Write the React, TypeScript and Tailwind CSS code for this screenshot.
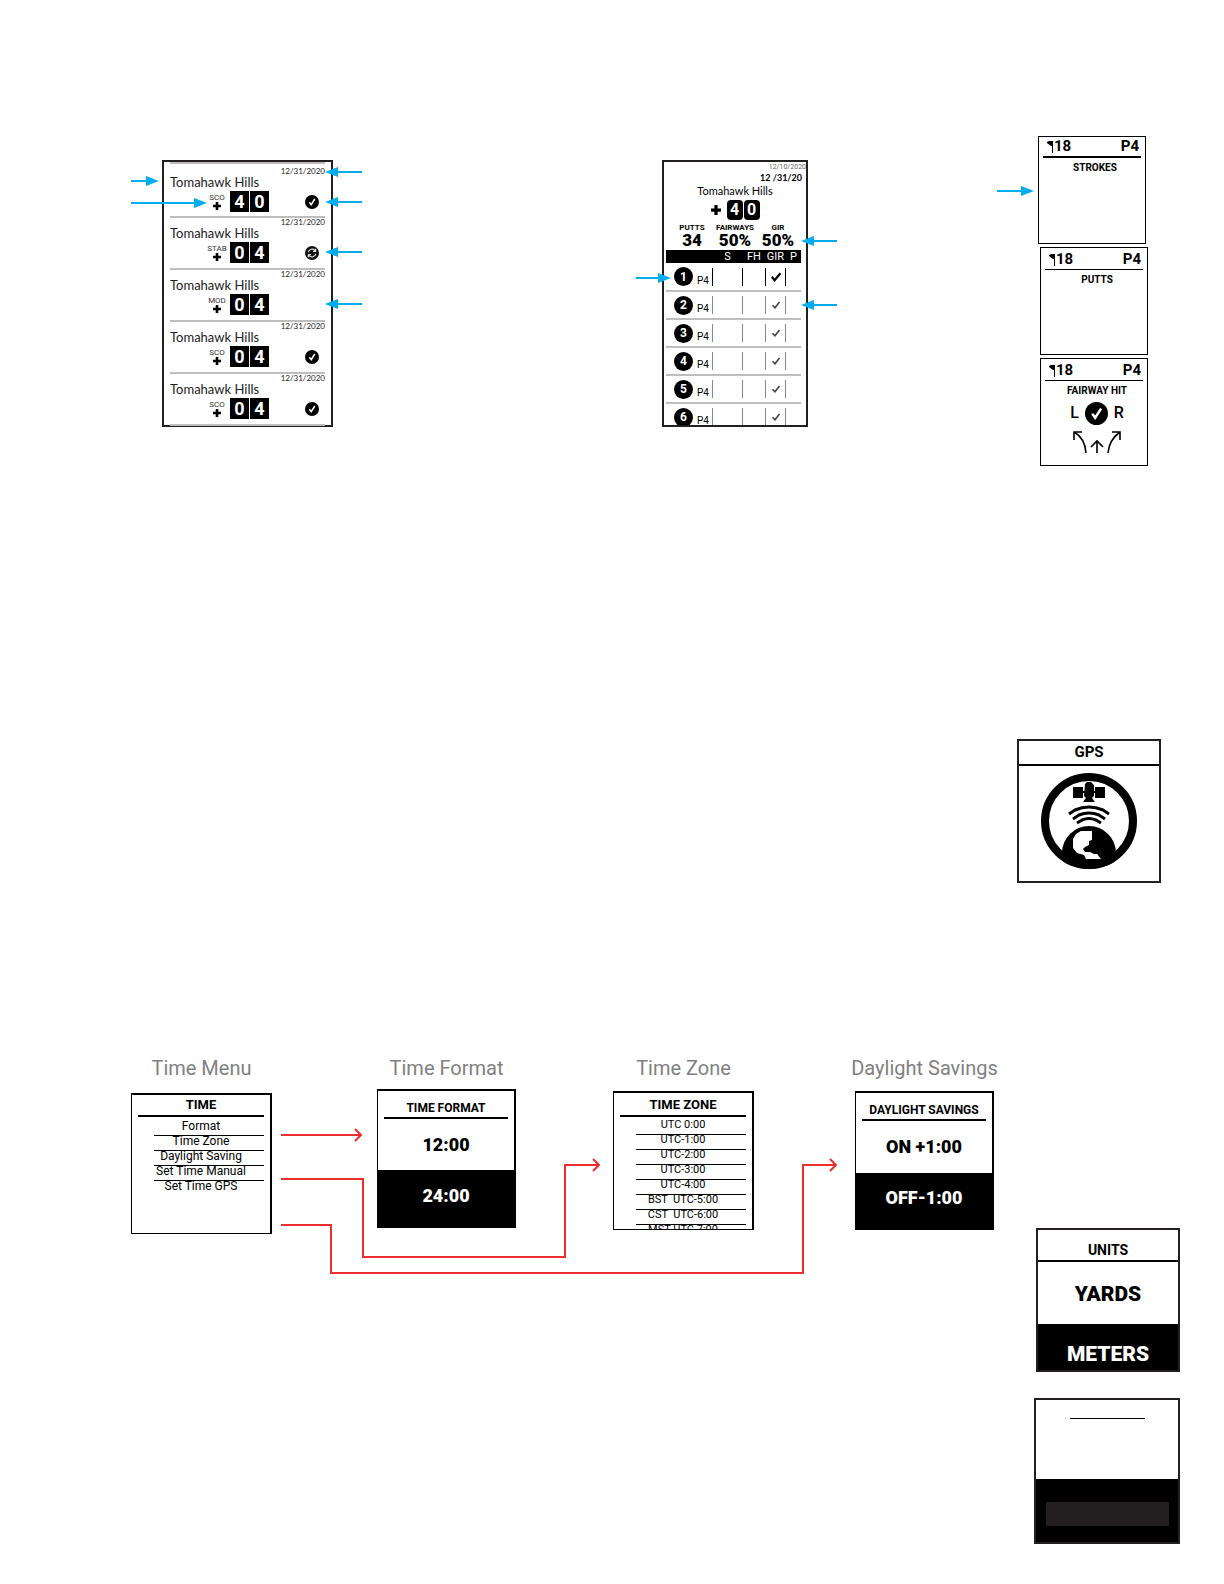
import type { ReactNode } from 'react';

type Mark = 'check' | 'sync' | 'none';

interface Round {
  mode: string;
  score: string;
  mark: Mark;
}

const rounds: Round[] = [
  { mode: 'SCO', score: '40', mark: 'check' },
  { mode: 'STAB', score: '04', mark: 'sync' },
  { mode: 'MOD', score: '04', mark: 'none' },
  { mode: 'SCO', score: '04', mark: 'check' },
  { mode: 'SCO', score: '04', mark: 'check' },
];

const totals = [
  { label: 'PUTTS', value: '34' },
  { label: 'FAIRWAYS', value: '50%' },
  { label: 'GIR', value: '50%' },
];

const holes = [1, 2, 3, 4, 5, 6];

const timeItems = ['Format', 'Time Zone', 'Daylight Saving', 'Set Time Manual', 'Set Time GPS'];

const zones = [
  'UTC 0:00',
  'UTC-1:00',
  'UTC-2:00',
  'UTC-3:00',
  'UTC-4:00',
  'BST  UTC-5:00',
  'CST  UTC-6:00',
  'MST UTC 7:00',
];

/* ---------- drawings ---------- */

function Arrow({ length, left, className }: { length: number; left?: boolean; className: string }) {
  return (
    <svg
      width={length}
      height={10}
      viewBox={`0 0 ${length} 10`}
      className={`absolute ${className} ${left ? 'rotate-180' : ''}`}
      aria-hidden="true"
    >
      <path d={`M0 5H${length - 12}`} stroke="#00aeef" strokeWidth={2} />
      <path d={`M${length - 13} 0L${length} 5L${length - 13} 10Z`} fill="#00aeef" />
    </svg>
  );
}

function Plus({ size }: { size: number }) {
  return (
    <svg width={size} height={size} viewBox="0 0 8 8" aria-hidden="true">
      <path d="M4 0V8M0 4H8" stroke="#000" strokeWidth={2.6} />
    </svg>
  );
}

function CheckBadge({ size }: { size: number }) {
  return (
    <svg width={size} height={size} viewBox="0 0 14 14" aria-hidden="true">
      <circle cx={7} cy={7} r={7} fill="#000" />
      <path d="M4.4 7.2L6.2 9.6L9.8 4" fill="none" stroke="#fff" strokeWidth={1.5} />
    </svg>
  );
}

function Check({ bold }: { bold?: boolean }) {
  return (
    <svg width={10} height={10} viewBox="0 0 10 10" aria-hidden="true">
      <path
        d={bold ? 'M0.8 4.8L3.6 8.2L9.4 1.2' : 'M1.5 5.2L4 7.8L8.5 2'}
        fill="none"
        stroke={bold ? '#000' : '#444'}
        strokeWidth={bold ? 2.2 : 1.6}
      />
    </svg>
  );
}

function SyncBadge() {
  return (
    <svg width={14} height={14} viewBox="0 0 14 14" aria-hidden="true">
      <circle cx={7} cy={7} r={7} fill="#111" />
      <path
        d="M3.2 6.2A4 4 0 0 1 10 4.4M10.6 2.8V5.4H8M10.8 7.8A4 4 0 0 1 4 9.6M3.4 11.2V8.6H6"
        fill="none"
        stroke="#ddd"
        strokeWidth={1.2}
      />
    </svg>
  );
}

function Flag() {
  return (
    <svg width={7} height={12} viewBox="0 0 7 12" aria-hidden="true">
      <path d="M0 1L2 0H6V5H4L0 2Z" fill="#000" />
      <path d="M5.5 0V12" stroke="#000" strokeWidth={1} />
    </svg>
  );
}

function GpsIcon() {
  return (
    <svg width={96} height={96} viewBox="0 0 96 96" aria-hidden="true">
      <clipPath id="dial">
        <circle cx={48} cy={48} r={48} />
      </clipPath>
      <circle cx={48} cy={48} r={44} fill="none" stroke="#000" strokeWidth={8} />
      <circle cx={48} cy={80} r={27} fill="#000" clipPath="url(#dial)" />
      <path
        d="M40 58H51V67L48 68V72L44 74L42 76L44 79L49 79L53 81H56L60 86H45L43 82L36 80L32 75V66L35 61Z"
        fill="#fff"
      />
      <path d="M32 14H42V25H32ZM54 14H64V25H54ZM42 18H54V20H42Z" fill="#000" />
      <path d="M44 11L46 9H50L53 12V23L51 25L54 29H42L45 25L43 23Z" fill="#000" />
      <path
        d="M28 41L34 37Q48 31 62 37L68 41M32 46L38 42Q48 38 58 42L64 46M36 50L41 47Q48 44 55 47L60 50"
        fill="none"
        stroke="#000"
        strokeWidth={3}
      />
    </svg>
  );
}

function ShotArrows() {
  return (
    <svg width={48} height={23} viewBox="0 0 48 23" fill="none" stroke="#000" strokeWidth={1.6} aria-hidden="true">
      <path d="M9 1H1V9M1 1Q12 7 13 22" />
      <path d="M24 22V11M18 16L24 10L30 16" />
      <path d="M39 1H47V9M47 1Q36 9 35 22" />
    </svg>
  );
}

/* ---------- score screens ---------- */

function Digits({ value, size }: { value: string; size: 'md' | 'sm' }) {
  const box = size === 'md' ? 'h-[21px] w-[19px] text-lg' : 'h-5 w-4 rounded-sm text-base';
  return (
    <div className="flex gap-px">
      {value.split('').map((d, i) => (
        <span key={i} className={`flex items-center justify-center bg-black font-bold text-white ${box}`}>
          {d}
        </span>
      ))}
    </div>
  );
}

function RoundHistory() {
  return (
    <div className="relative mt-6 h-[267px] border-2 border-[#231f20]">
      <ul className="px-1.5">
        {rounds.map((r, i) => (
          <li
            key={i}
            className={`border-t-2 border-[#bdbdbd] font-[Lato,sans-serif] ${i === 0 ? 'h-[54px] pt-[3px]' : 'h-[52px]'}`}
          >
            <div className="text-right text-[8px] leading-[9px] text-[#222]">12/31/2020</div>
            <div className="text-[13px] leading-3 text-[#222]">Tomahawk Hills</div>
            <div className="mt-[3px] flex items-center pr-1.5 pl-[34px] font-[Roboto,sans-serif]">
              <div className="flex w-[26px] flex-col items-center">
                <span className="text-[8px] leading-[9px] text-[#333]">{r.mode}</span>
                <Plus size={8} />
              </div>
              <Digits value={r.score} size="md" />
              <span className="ml-auto">
                {r.mark === 'check' && <CheckBadge size={14} />}
                {r.mark === 'sync' && <SyncBadge />}
              </span>
            </div>
          </li>
        ))}
      </ul>
      <div className="mx-1.5 border-t-2 border-[#bdbdbd]" />
      <Arrow length={28} className="top-3.5 -left-[33px]" />
      <Arrow length={76} className="top-9 -left-[33px]" />
      <Arrow length={37} left className="top-[5px] -right-[31px]" />
      <Arrow length={37} left className="top-[35px] -right-[31px]" />
      <Arrow length={37} left className="top-[85px] -right-[31px]" />
      <Arrow length={37} left className="top-[137px] -right-[31px]" />
    </div>
  );
}

function Scorecard() {
  return (
    <div className="relative mt-6 h-[267px] border-2 border-[#231f20]">
      <div className="h-full overflow-hidden">
        <div className="pt-px text-right text-[7px] leading-2 text-[#666]">12/10/2020</div>
        <div className="mt-px pr-1 text-right font-[Lato,sans-serif] text-[9px] leading-3 font-bold">12 /31/20</div>
        <div className="text-center font-[Lato,sans-serif] text-[11px] leading-[14px]">Tomahawk Hills</div>
        <div className="mt-0.5 flex items-center justify-center gap-1.5">
          <Plus size={10} />
          <Digits value="40" size="sm" />
        </div>
        <dl className="mt-1 flex justify-center gap-[3px] pb-0.5">
          {totals.map((t) => (
            <div key={t.label} className="flex w-10 flex-col items-center">
              <dt className="text-[8px] leading-2 font-bold">{t.label}</dt>
              <dd className="text-[17px] leading-4 font-black">{t.value}</dd>
            </div>
          ))}
        </dl>
        <div className="mr-[5px] ml-0.5">
          <table className="w-full table-fixed border-collapse">
            <colgroup>
              <col className="w-[46px]" />
              <col className="w-[31px]" />
              <col className="w-[22px]" />
              <col className="w-[21px]" />
              <col />
            </colgroup>
            <thead>
              <tr className="bg-black text-[11px] leading-[13px] text-white">
                <th className="p-0" />
                <th className="p-0 font-normal">S</th>
                <th className="p-0 font-normal">FH</th>
                <th className="p-0 font-normal">GIR</th>
                <th className="p-0 font-normal">P</th>
              </tr>
            </thead>
            <tbody>
              {holes.map((h) => {
                const line = h === 1 ? 'border-black' : 'border-[#888]';
                return (
                  <tr key={h} className="h-7 border-b-2 border-[#bdbdbd]">
                    <td className="p-0">
                      <div className="flex items-center gap-1 pl-2">
                        <span className="flex size-[19px] items-center justify-center rounded-full bg-black text-xs font-bold text-white">
                          {h}
                        </span>
                        <span className="mt-2 text-[10px] leading-3">P4</span>
                      </div>
                    </td>
                    <td className="p-0">
                      <div className={`h-[18px] border-x ${line}`} />
                    </td>
                    <td className="p-0" />
                    <td className="p-0">
                      <div className={`flex h-[18px] items-center justify-center border-x ${line}`}>
                        <Check bold={h === 1} />
                      </div>
                    </td>
                    <td className="p-0" />
                  </tr>
                );
              })}
            </tbody>
          </table>
        </div>
      </div>
      <Arrow length={35} className="top-[111px] -left-7" />
      <Arrow length={36} left className="top-[74px] -right-[31px]" />
      <Arrow length={36} left className="top-[138px] -right-[31px]" />
    </div>
  );
}

function HoleScreen({ title, thick, children }: { title: string; thick?: boolean; children?: ReactNode }) {
  return (
    <div className="h-[108px] w-[108px] border border-black px-1">
      <div
        className={`flex items-center justify-between border-black pr-0.5 pl-1 text-[15px] font-bold ${
          thick ? 'h-[21px] border-b-2' : 'h-[22px] border-b pt-0.5'
        }`}
      >
        <span className="flex items-center">
          <Flag />
          18
        </span>
        <span>P4</span>
      </div>
      <div className="pl-1.5">
        <div className="mt-1 text-center text-[10px] leading-3 font-bold">{title}</div>
        {children}
      </div>
    </div>
  );
}

/* ---------- settings screens ---------- */

function FlowStep({ label, className, children }: { label: string; className: string; children: ReactNode }) {
  return (
    <div className={`flex flex-col items-center ${className}`}>
      <h2 className="text-xl leading-6 whitespace-nowrap text-[#808080]">{label}</h2>
      {children}
    </div>
  );
}

function RedPaths() {
  return (
    <svg
      width={560}
      height={150}
      viewBox="0 0 560 150"
      fill="none"
      stroke="#ee2d2d"
      strokeWidth={2}
      className="absolute top-[74px] left-[150px] overflow-visible"
      aria-hidden="true"
    >
      <path d="M0 5H80M74 -1L80 5L74 11" />
      <path d="M0 49H82V127H284V35H318M312 29L318 35L312 41" />
      <path d="M0 95H50V143H522V35H555M549 29L555 35L549 41" />
    </svg>
  );
}

export default function App() {
  return (
    <main className="overflow-x-hidden bg-white pt-[136px] pb-10 font-[Roboto,sans-serif] text-black">
      <section className="grid grid-cols-[171px_329fr_146px_230fr_110px] items-start pr-[76px] pl-[162px]">
        <RoundHistory />
        <div className="col-start-3">
          <Scorecard />
        </div>
        <div className="relative col-start-5 flex flex-col gap-[3px]">
          <HoleScreen title="STROKES" thick />
          <div className="flex flex-col items-end gap-[3px]">
            <HoleScreen title="PUTTS" />
            <HoleScreen title="FAIRWAY HIT">
              <div className="mt-1 flex items-center justify-center gap-1.5 text-base leading-6 font-medium">
                L
                <CheckBadge size={23} />
                R
              </div>
              <div className="mt-1.5 flex justify-center">
                <ShotArrows />
              </div>
            </HoleScreen>
          </div>
          <Arrow length={37} className="top-[50px] -left-[41px]" />
        </div>
      </section>

      <section className="mt-[273px] mr-[63px] ml-auto h-36 w-36 border-2 border-[#231f20]">
        <h2 className="border-b-2 border-black text-center text-[15px] leading-[23px] font-bold">GPS</h2>
        <div className="mt-[7px] flex justify-center">
          <GpsIcon />
        </div>
      </section>

      <section className="mt-[173px] flex items-start justify-between pr-11 pl-[131px]">
        <div className="relative flex shrink-0 items-start">
          <FlowStep label="Time Menu" className="w-[141px]">
            <div className="mt-[13px] h-[141px] w-full border border-t-2 border-r-2 border-black px-1.5">
              <h3 className="border-b-2 border-black text-center text-[13px] leading-5 font-bold">TIME</h3>
              <ul className="mt-1 ml-4">
                {timeItems.map((item) => (
                  <li
                    key={item}
                    className="h-[15px] border-b border-black text-center text-xs leading-[10px] whitespace-nowrap last:border-0"
                  >
                    <span className="mr-4">{item}</span>
                  </li>
                ))}
              </ul>
            </div>
          </FlowStep>
          <FlowStep label="Time Format" className="ml-[105px] w-[139px]">
            <div className="mt-[9px] flex h-[139px] w-full flex-col border border-t-2 border-r-2 border-black">
              <h3 className="mx-1.5 border-b-2 border-black pt-2 text-center text-xs leading-[18px] font-bold">TIME FORMAT</h3>
              <div className="flex h-[51px] items-center justify-center text-lg font-black">12:00</div>
              <div className="flex grow items-center justify-center bg-black pb-1.5 text-lg font-black text-white">24:00</div>
            </div>
          </FlowStep>
          <FlowStep label="Time Zone" className="ml-[97px] w-[141px]">
            <div className="mt-[11px] h-[139px] w-full overflow-hidden border border-t-2 border-r-2 border-black px-1.5">
              <h3 className="border-b-2 border-black pt-0.5 text-center text-[13px] leading-5 font-bold">TIME ZONE</h3>
              <ul className="mt-[3px] ml-4">
                {zones.map((zone) => (
                  <li
                    key={zone}
                    className="h-[15px] border-b border-black text-center text-[11px] leading-[10px] whitespace-pre"
                  >
                    <span className="mr-4">{zone}</span>
                  </li>
                ))}
              </ul>
            </div>
          </FlowStep>
          <FlowStep label="Daylight Savings" className="ml-[101px] w-[139px]">
            <div className="mt-[11px] flex h-[139px] w-full flex-col border border-t-2 border-r-2 border-black">
              <h3 className="mx-1.5 border-b-2 border-black pt-2 text-center text-xs leading-[18px] font-bold whitespace-nowrap">
                DAYLIGHT SAVINGS
              </h3>
              <div className="flex h-[52px] items-center justify-center text-lg font-black">ON +1:00</div>
              <div className="flex grow items-center justify-center bg-black pb-1.5 text-lg font-black text-white">OFF-1:00</div>
            </div>
          </FlowStep>
          <RedPaths />
        </div>

        <div className="mt-[172px] flex flex-col items-end gap-[26px]">
          <div className="flex h-36 w-36 flex-col border-2 border-[#231f20]">
            <h2 className="border-b-2 border-black pt-2.5 text-center text-sm leading-5 font-bold">UNITS</h2>
            <div className="flex h-[62px] items-center justify-center pt-1 text-[21px] font-black">YARDS</div>
            <div className="flex grow items-end justify-center bg-black pb-0.5 text-[21px] leading-7 font-black text-white">METERS</div>
          </div>
          <div className="flex h-[146px] w-[146px] flex-col border-2 border-[#231f20]">
            <div className="mx-auto mt-[18px] w-[75px] border-t border-black" />
            <div className="mt-[60px] flex grow items-center justify-center bg-black pt-1.5">
              <div className="h-6 w-[123px] bg-[#231f20]" />
            </div>
          </div>
        </div>
      </section>
    </main>
  );
}
